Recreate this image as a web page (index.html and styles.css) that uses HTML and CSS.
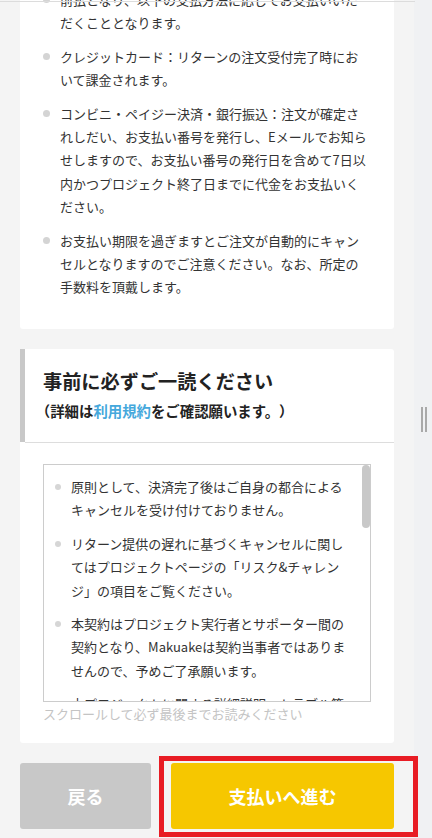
FILE: index.html
```html
<!DOCTYPE html>
<html lang="ja">
<head>
<meta charset="utf-8">
<title>お支払い</title>
<link rel="stylesheet" href="styles.css">
</head>
<body>
<div class="topline"></div>
<div class="layout">
  <main class="page">
    <div class="page-inner">
      <section class="card card-pay">
        <ul class="notes">
          <li>前払となり、以下の支払方法に応じてお支払いいただくこととなります。</li>
          <li>クレジットカード：リターンの注文受付完了時において課金されます。</li>
          <li>コンビニ・ペイジー決済・銀行振込：注文が確定されしだい、お支払い番号を発行し、Eメールでお知らせしますので、お支払い番号の発行日を含めて7日以内かつプロジェクト終了日までに代金をお支払いください。</li>
          <li>お支払い期限を過ぎますとご注文が自動的にキャンセルとなりますのでご注意ください。なお、所定の手数料を頂戴します。</li>
        </ul>
      </section>

      <section class="card card-terms">
        <div class="terms-head">
          <h2 class="terms-title">事前に必ずご一読ください</h2>
          <p class="terms-sub"><span class="paren-open">（</span>詳細は<a class="terms-link" href="#">利用規約</a>をご確認願います。）</p>
        </div>
        <div class="terms-body">
          <div class="terms-box">
            <ul class="terms-list">
              <li>原則として、決済完了後はご自身の都合によるキャンセルを受け付けておりません。</li>
              <li>リターン提供の遅れに基づくキャンセルに関してはプロジェクトページの「リスク&amp;チャレンジ」の項目をご覧ください。</li>
              <li>本契約はプロジェクト実行者とサポーター間の契約となり、Makuakeは契約当事者ではありませんので、予めご了承願います。</li>
              <li>本プロジェクトに関する詳細説明、トラブル等についてはプロジェクト実行者へ直接お問い合わせください。</li>
              <li>リターンの内容・お届け時期は、プロジェクトの状況により変更となる場合があります。</li>
              <li>その他の事項については利用規約をご確認ください。</li>
            </ul>
            <span class="terms-thumb"></span>
          </div>
          <p class="terms-hint">スクロールして必ず最後までお読みください</p>
        </div>
      </section>

      <div class="actions">
        <button class="btn btn-back" type="button">戻る</button>
        <button class="btn btn-next" type="button">支払いへ進む</button>
      </div>
    </div>
  </main>
  <aside class="side">
    <span class="grip"></span>
  </aside>
</div>
</body>
</html>
```

FILE: styles.css
```css
* {
  box-sizing: border-box;
}

html, body {
  margin: 0;
  padding: 0;
}

body {
  height: 100vh;
  overflow: hidden;
  font-family: "Noto Sans CJK JP", "Noto Sans", sans-serif;
  color: #333;
  background: #f4f4f4;
}

.topline {
  position: fixed;
  top: 1px;
  left: 0;
  width: 415px;
  height: 1px;
  background: #dcdcdc;
  z-index: 5;
}

.layout {
  display: flex;
  height: 100vh;
}

.page {
  flex: 1;
  background: #f4f4f4;
  padding: 0 20px;
}

.page-inner {
  margin-top: -42px;
  display: flex;
  flex-direction: column;
}

.card {
  background: #fff;
  border-radius: 3px;
}

/* payment notes */
.card-pay {
  padding: 30px 25px 30px 23px;
}

.notes {
  list-style: none;
  margin: 0;
  padding: 0;
  display: flex;
  flex-direction: column;
  gap: 10px;
}

.notes li {
  display: flex;
  font-size: 13px;
  line-height: 23.4px;
}

.notes li::before {
  content: "";
  flex: none;
  width: 7px;
  height: 7px;
  margin: 8px 10px 0 0;
  border-radius: 50%;
  background: #d4d4d4;
}

/* terms card */
.card-terms {
  margin-top: 20px;
}

.terms-head {
  border-left: 5px solid #c8c8c8;
  padding: 18px 18px 20px 18px;
}

.terms-title {
  margin: 0;
  font-size: 19.2px;
  line-height: 28px;
  font-weight: 700;
  color: #222;
}

.terms-sub {
  margin: 5px 0 0;
  font-size: 14.4px;
  line-height: 22px;
  font-weight: 700;
  color: #222;
  text-spacing-trim: space-all;
}

.paren-open {
  font-feature-settings: "halt";
}

.terms-link {
  color: #45a8dc;
  text-decoration: none;
}

.terms-body {
  margin-left: 5px;
  border-top: 1px solid #dddddd;
  padding: 21px 23px 17px 18px;
}

.terms-box {
  position: relative;
  height: 238px;
  border: 1px solid #cccccc;
  overflow: hidden;
}

.terms-thumb {
  position: absolute;
  top: 0;
  right: 0;
  width: 8px;
  height: 63px;
  border-radius: 4px;
  background: #c8c8c8;
}

.terms-list {
  list-style: none;
  margin: 0;
  padding: 10px 19px 10px 11px;
  display: flex;
  flex-direction: column;
  gap: 10px;
}

.terms-list li {
  display: flex;
  font-size: 13px;
  line-height: 23.4px;
}

.terms-list li::before {
  content: "";
  flex: none;
  width: 6px;
  height: 6px;
  margin: 9px 10px 0 0;
  border-radius: 50%;
  background: #d6d6d6;
}

.terms-hint {
  margin: 0;
  font-size: 13px;
  line-height: 24px;
  color: #c4c4c4;
}

/* buttons */
.actions {
  display: flex;
  gap: 20px;
  margin-top: 20.5px;
}

.btn {
  height: 66px;
  border: 0;
  border-radius: 3px;
  font-family: "Noto Sans CJK JP", "Noto Sans", sans-serif;
  font-size: 18px;
  font-weight: 700;
  color: #fff;
  cursor: pointer;
}

.btn-back {
  width: 131px;
  background: #c8c8c8;
}

.btn-next {
  flex: 1;
  background: #f6c700;
  position: relative;
}

.btn-next::after {
  content: "";
  position: absolute;
  top: -7px;
  left: -12px;
  right: -24px;
  bottom: -8px;
  border: 5px solid #e81c24;
  pointer-events: none;
}

/* side strip */
.side {
  flex: none;
  width: 18px;
  background: #f0f1f3;
  display: flex;
  align-items: center;
  justify-content: center;
  padding-left: 2px;
}

.grip {
  width: 6px;
  height: 25px;
  border-left: 2px solid #a9a9a9;
  border-right: 2px solid #a9a9a9;
}
```
